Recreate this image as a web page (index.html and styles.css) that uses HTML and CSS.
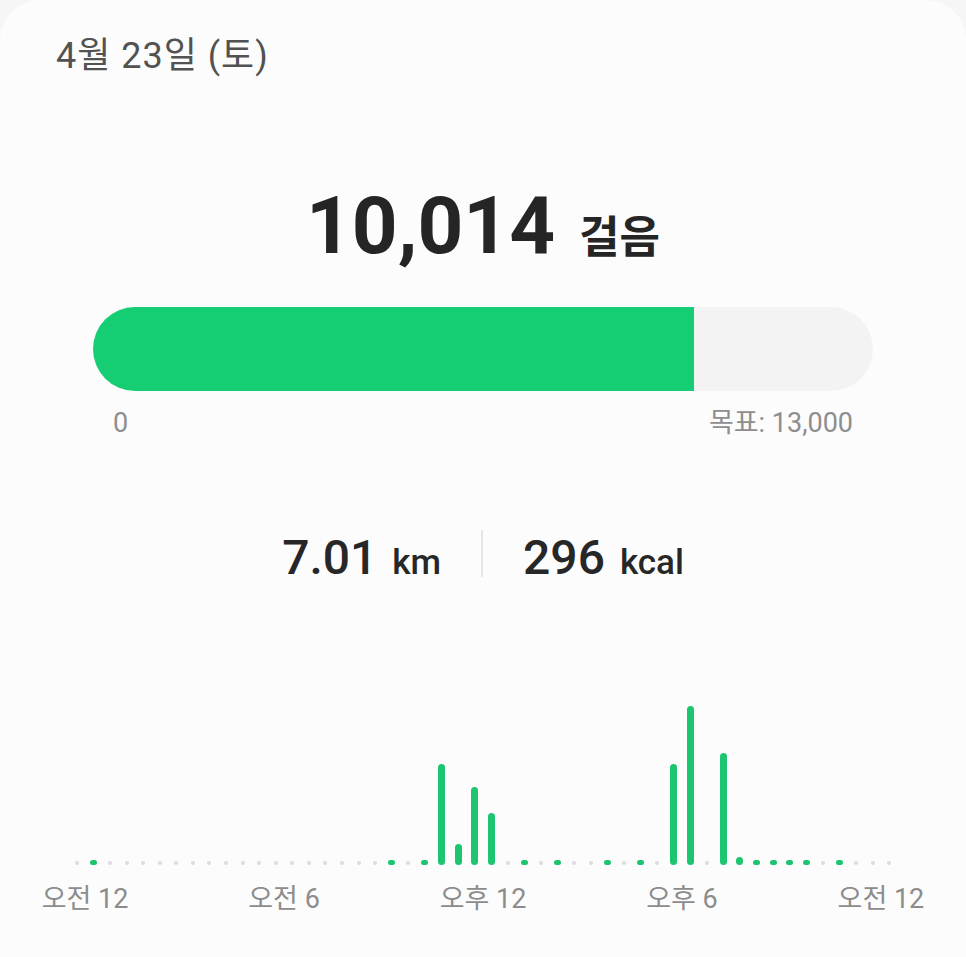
FILE: index.html
```html
<!DOCTYPE html>
<html lang="ko">
<head>
  <meta charset="UTF-8">
  <meta name="viewport" content="width=device-width, initial-scale=1.0">
  <title>걸음 수</title>
  <link rel="stylesheet" href="styles.css">
</head>
<body>
  <main class="card">
    <h1 class="date">4월 23일 (토)</h1>

    <section class="steps">
      <p class="steps-count"><span class="steps-num">10,014</span><span class="steps-unit">걸음</span></p>
      <div class="progress">
        <div class="progress-fill" style="width: 77.03%"></div>
      </div>
      <div class="progress-labels">
        <span>0</span>
        <span>목표: 13,000</span>
      </div>
    </section>

    <section class="stats">
      <div class="stat"><span class="stat-num">7.01</span><span class="stat-unit">km</span></div>
      <div class="stat-divider"></div>
      <div class="stat"><span class="stat-num">296</span><span class="stat-unit">kcal</span></div>
    </section>

    <section class="chart">
      <div class="chart-bars" id="chartBars"></div>
      <div class="chart-axis">
        <span class="axis-label">오전 12</span>
        <span class="axis-label">오전 6</span>
        <span class="axis-label">오후 12</span>
        <span class="axis-label">오후 6</span>
        <span class="axis-label">오전 12</span>
      </div>
    </section>
  </main>

  <script>
    // bar height in px for each half hour, 0 = no steps
    const bars = {
      1: 5, 19: 5, 21: 5, 22: 101, 23: 21, 24: 78, 25: 52,
      27: 5, 29: 5, 32: 5, 34: 5, 36: 101, 37: 159, 39: 112,
      40: 8, 41: 5, 42: 5, 43: 5, 44: 5, 46: 5
    };

    const chart = document.getElementById('chartBars');
    for (let i = 0; i < 50; i++) {
      const h = bars[i];
      const mark = h
        ? `<div class="bar" style="height: ${h}px"></div>`
        : '<div class="dot"></div>';
      chart.insertAdjacentHTML('beforeend', `<div class="slot">${mark}</div>`);
    }
  </script>
</body>
</html>
```

FILE: styles.css
```css
* {
  box-sizing: border-box;
}
body {
  margin: 0;
  background: #f6f6f6;
  font-family: Roboto, "Noto Sans CJK KR", sans-serif;
}
.card {
  min-height: 957px;
  padding-top: 35px;
  background: #fcfcfc;
  border-radius: 40px 40px 0 0;
}
.date {
  margin: 0 0 0 56px;
  font-size: 36px;
  line-height: 42px;
  font-weight: 400;
  letter-spacing: 1px;
  color: #525252;
}

/* steps + goal bar */
.steps-count {
  display: flex;
  justify-content: center;
  align-items: baseline;
  gap: 24px;
  height: 96px;
  margin: 101px 0 0;
  line-height: 96px;
  color: #252525;
}
.steps-num {
  font-size: 80px;
  font-weight: 700;
}
.steps-unit {
  font-size: 44px;
  line-height: 52px;
  font-weight: 700;
}
.progress {
  width: 780px;
  height: 84px;
  margin: 33px auto 0;
  background: #f3f3f3;
  border-radius: 42px;
  overflow: hidden;
}
.progress-fill {
  height: 100%;
  background: #15cd72;
}
.progress-labels {
  display: flex;
  justify-content: space-between;
  width: 780px;
  margin: 17px auto 0;
  padding: 0 20px;
  font-size: 27px;
  line-height: 30px;
  color: #8e8e8e;
}

/* distance / calories */
.stats {
  display: flex;
  justify-content: center;
  height: 56px;
  margin-top: 92px;
  color: #272727;
}
.stat {
  display: flex;
  align-items: baseline;
  line-height: 56px;
}
.stat-num {
  font-size: 48px;
  font-weight: 500;
}
.stat-unit {
  margin-left: 15px;
  font-size: 35px;
  line-height: 44px;
  font-weight: 500;
}
.stat-divider {
  width: 2px;
  height: 47px;
  margin: 0 40px;
  background: #e6e6e6;
}

/* hourly chart */
.chart {
  width: 829px;
  margin: 109px auto 0;
}
.chart-bars {
  display: grid;
  grid-template-columns: repeat(50, minmax(0, 1fr));
  align-items: end;
  height: 170px;
}
.slot {
  display: flex;
  justify-content: center;
}
.dot {
  width: 4px;
  height: 4px;
  border-radius: 50%;
  background: #dcdcdc;
}
.bar {
  width: 7px;
  border-radius: 4px;
  background: #1cc56f;
}
.chart-axis {
  display: grid;
  grid-template-columns: repeat(25, minmax(0, 1fr));
  margin-top: 18px;
  font-size: 27px;
  line-height: 32px;
  color: #8c8c8c;
}
.axis-label {
  display: flex;
  justify-content: center;
  white-space: nowrap;
}
.axis-label:nth-child(1) { grid-column: 1; }
.axis-label:nth-child(2) { grid-column: 7; }
.axis-label:nth-child(3) { grid-column: 13; }
.axis-label:nth-child(4) { grid-column: 19; }
.axis-label:nth-child(5) { grid-column: 25; }
```
